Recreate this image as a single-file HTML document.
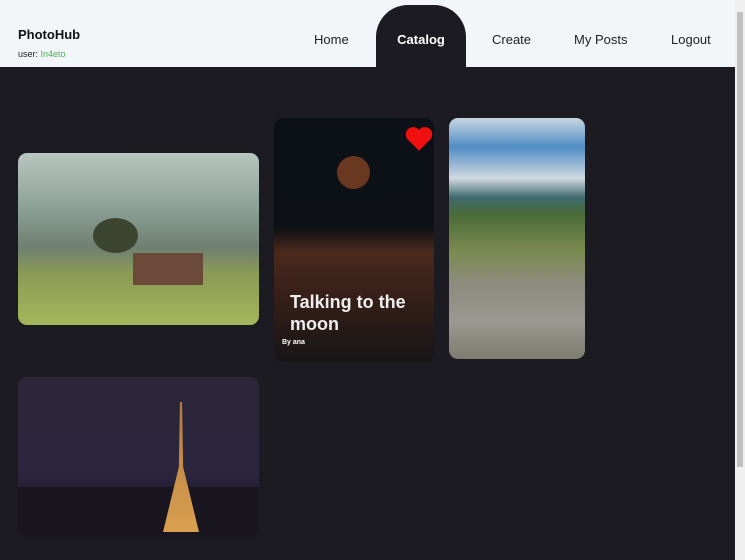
<!DOCTYPE html>
<html><head><style>
*{margin:0;padding:0;box-sizing:border-box}
body{width:745px;height:560px;overflow:hidden;background:#1c1b21;font-family:"Liberation Sans",sans-serif;position:relative}
.hdr{position:absolute;left:0;top:0;width:735px;height:67px;background:#f2f6f9}
.logo{position:absolute;left:18px;top:27px;font-weight:bold;font-size:13px;color:#111}
.user{position:absolute;left:18px;top:49px;font-size:9px;color:#222}
.user span{color:#4caf50}
.nav{position:absolute;top:32px;font-size:13px;color:#222}
.tab{position:absolute;left:376px;top:5px;width:90px;height:62px;background:#1c1b21;border-radius:32px 32px 0 0;color:#fff;font-weight:bold;font-size:13px;text-align:center;padding-top:27px}
.sb{position:absolute;left:735px;top:0;width:10px;height:560px;background:#f0f0f0}
.sb div{position:absolute;left:2px;top:12px;width:6px;height:455px;background:#c1c1c1}
.c{position:absolute;border-radius:9px;overflow:hidden}
</style></head><body>
<div class="hdr">
<div class="logo">PhotoHub</div>
<div class="user">user: <span>In4eto</span></div>
<div class="nav" style="left:314px">Home</div>
<div class="tab">Catalog</div>
<div class="nav" style="left:492px">Create</div>
<div class="nav" style="left:574px">My Posts</div>
<div class="nav" style="left:671px">Logout</div>
</div>
<div class="sb"><div></div></div>
<div class="c" style="left:18px;top:153px;width:241px;height:172px;background:linear-gradient(180deg,#b8c6c0 0%,#8fa39a 30%,#6f8072 55%,#8a9a55 70%,#a6b65a 100%)">
<div style="position:absolute;left:115px;top:100px;width:70px;height:32px;background:#6b4a3a"></div>
<div style="position:absolute;left:75px;top:65px;width:45px;height:35px;border-radius:50%;background:#3d4430"></div>
</div>
<div class="c" style="left:274px;top:118px;width:160px;height:244px;background:linear-gradient(180deg,#0c1117 0%,#0d1116 45%,#4a2a1c 55%,#3a2119 70%,#171417 100%)">
<div style="position:absolute;left:63px;top:38px;width:33px;height:33px;border-radius:50%;background:#6a3720"></div>
<svg style="position:absolute;left:130px;top:7px" width="30" height="27" viewBox="0 0 24 22"><path d="M12 21 L2.5 11.5 A5.5 5.5 0 0 1 12 4 A5.5 5.5 0 0 1 21.5 11.5 Z" fill="#f01010"/></svg>
<div style="position:absolute;left:16px;top:173px;color:#eee;font-weight:bold;font-size:18px;line-height:22px">Talking to the<br>moon</div>
<div style="position:absolute;left:8px;top:221px;color:#fff;font-weight:bold;font-size:7px">By ana</div>
</div>
<div class="c" style="left:449px;top:118px;width:136px;height:241px;background:linear-gradient(180deg,#c9d6e0 0%,#4f8cc4 12%,#cfd9df 25%,#3f6a6f 33%,#4a6b38 40%,#7b8a50 55%,#8e8c80 70%,#9a9890 85%,#7d7c70 100%)"></div>
<div class="c" style="left:18px;top:377px;width:241px;height:160px;background:linear-gradient(180deg,#2b2638 0%,#2c2540 60%,#1a1520 85%,#0d0c10 100%)">
<div style="position:absolute;left:0;top:110px;width:241px;height:50px;background:#191620"></div>
<div style="position:absolute;left:145px;top:25px;width:36px;height:130px;background:linear-gradient(#b07a40,#d9a050);clip-path:polygon(47% 0,53% 0,56% 50%,100% 100%,0 100%,44% 50%)"></div>
</div>
</body></html>
